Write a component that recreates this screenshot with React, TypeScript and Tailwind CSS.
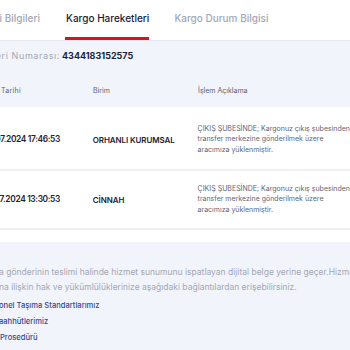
import React from 'react';

const rows = [
  { date: '17.07.2024 17:46:53', unit: 'ORHANLI KURUMSAL' },
  { date: '17.07.2024 13:30:53', unit: 'CİNNAH' },
];

const Description = () => (
  <div className="whitespace-nowrap text-[7px] leading-[10.5px] text-[#626576]">
    ÇIKIŞ ŞUBESİNDE; Kargonuz çıkış şubesinden
    <br />
    transfer merkezine gönderilmek üzere
    <br />
    aracımıza yüklenmiştir.
  </div>
);

const App = () => {
  return (
    <div className="h-[350px] w-[350px] overflow-hidden bg-[#f1f4fa] font-['Inter',sans-serif]">
      {/* tabs */}
      <div className="flex h-[41px] items-stretch border-b border-[#e4e7ee] bg-white text-[10px] font-medium">
        <div className="flex w-[40px] items-center justify-end whitespace-nowrap pb-[3px] text-[#a4a7b5]">
          Gönderi Bilgileri
        </div>
        <div className="relative ml-[26px] flex items-center whitespace-nowrap pb-[3px] text-[#1e2033]">
          Kargo Hareketleri
          <span className="absolute bottom-0 left-[-1px] right-0 h-[3px] bg-[#d7141e]" />
        </div>
        <div className="ml-[25px] flex items-center whitespace-nowrap pb-[3px] text-[#a4a7b5]">
          Kargo Durum Bilgisi
        </div>
      </div>

      {/* shipment number */}
      <div className="flex h-[34px] items-start pt-[8px]">
        <div className="flex w-[60px] justify-end whitespace-nowrap text-[9px] tracking-[0.6px] text-[#a4a7b5]">
          Gönderi Numarası:
        </div>
        <div className="ml-[2px] text-[9px] font-bold text-[#1b1f3b]">4344183152575</div>
      </div>

      {/* table header */}
      <div className="flex h-[32px] items-center text-[7px] text-[#5f6272]">
        <div className="flex w-[93px]">
          <div className="flex w-[21px] justify-end whitespace-nowrap tracking-[0.3px]">İşlem Tarihi</div>
        </div>
        <div className="w-[105px]">Birim</div>
        <div>İşlem Açıklama</div>
      </div>

      {/* rows */}
      <div className="bg-white">
        {rows.map((r, i) => (
          <div
            key={r.unit}
            className={`flex items-center border-b-2 border-[#eef0f5] ${i === 0 ? 'h-[64px] pt-[3px]' : 'h-[59px]'}`}
          >
            <div className="flex w-[93px]">
              <div className="flex w-[60px] justify-end whitespace-nowrap text-[8.4px] font-semibold tracking-[-0.35px] text-[#1e2033]">
                {r.date}
              </div>
            </div>
            <div className="w-[105px] whitespace-nowrap text-[8px] font-semibold tracking-[-0.1px] text-[#1e2033]">
              {r.unit}
            </div>
            <Description />
          </div>
        ))}
        <div className="h-[12px]" />
      </div>

      {/* footer text */}
      <div className="whitespace-nowrap pt-[23px] text-[8.5px] text-[#a4a7b5]">
        <div className="-ml-[1px] leading-[15px]">
          a gönderinin teslimi halinde hizmet sunumunu ispatlayan dijital belge yerine geçer.Hizmet
        </div>
        <div className="-ml-[1px] leading-[15px]">
          na ilişkin hak ve yükümlülüklerinize aşağıdaki bağlantılardan erişebilirsiniz.
        </div>
        <div className="mt-[5px] flex flex-col gap-[4px] text-[7.6px] font-medium leading-[12px] text-[#38468f]">
          <a className="-ml-[1px]">onel Taşıma Standartlarımız</a>
          <a className="-ml-[1px]">aahhütlerimiz</a>
          <a className="ml-[0px]">Prosedürü</a>
        </div>
      </div>
    </div>
  );
};

export default App;
